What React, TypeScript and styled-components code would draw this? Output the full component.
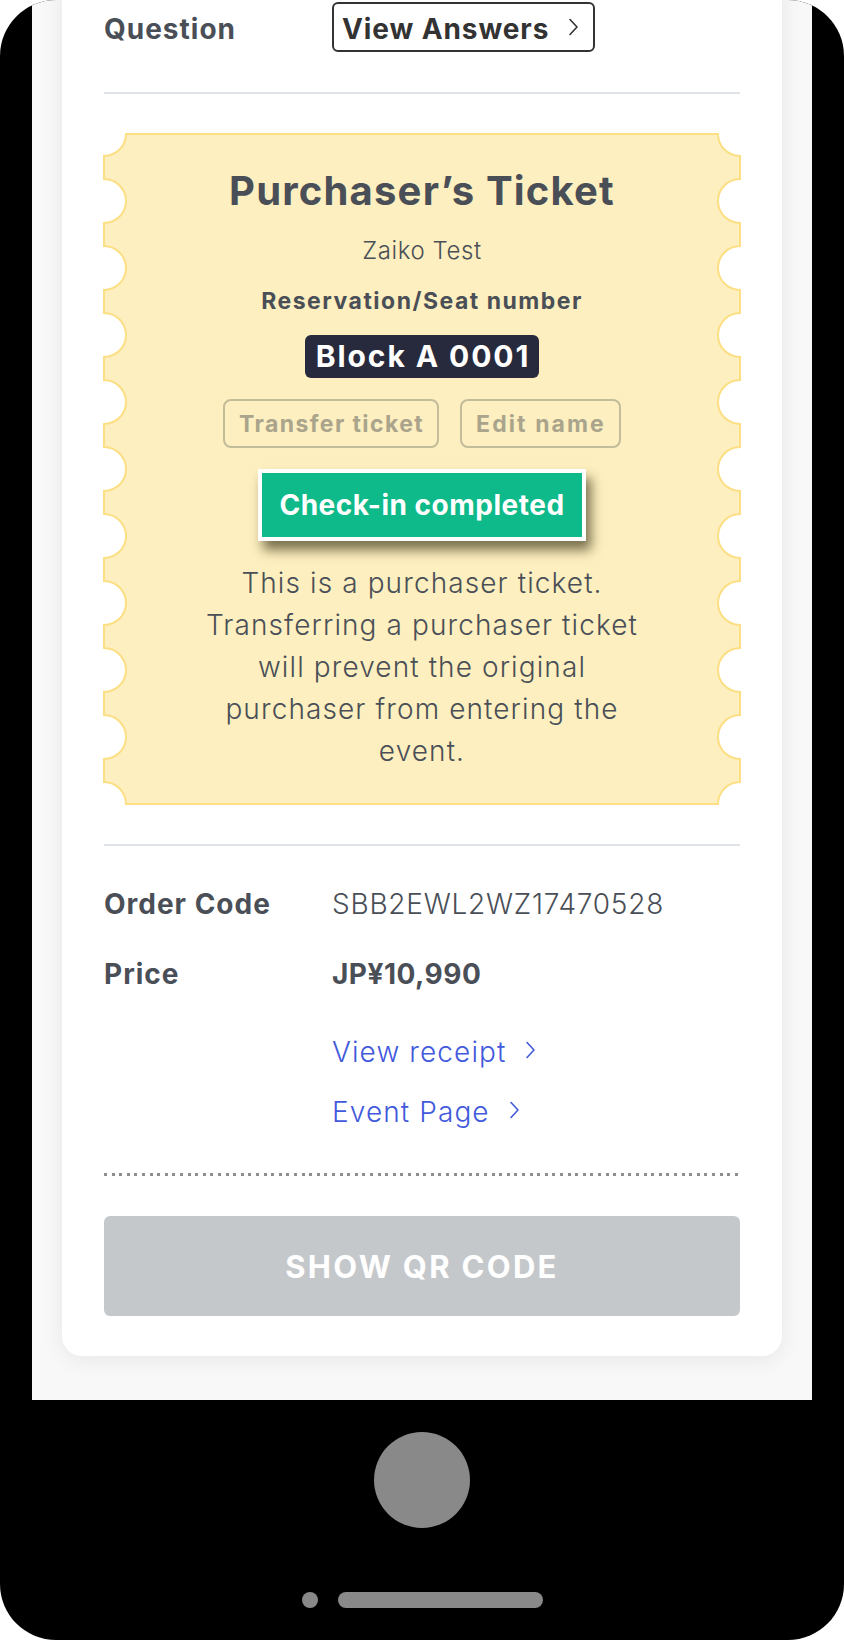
import React from "react";
import styled, { createGlobalStyle } from "styled-components";

const GlobalStyle = createGlobalStyle`
  html, body { margin: 0; padding: 0; background: #ffffff; }
  body {
    width: 844px;
    height: 1640px;
    overflow: hidden;
    font-family: Inter, "Open Sans", sans-serif;
    -webkit-font-smoothing: antialiased;
  }
  * { box-sizing: border-box; }
`;

const TEXT = "#4a4f57";

const Phone = styled.div`
  width: 844px;
  height: 1640px;
  background: #000;
  border-radius: 56px;
  overflow: hidden;
  display: flex;
  flex-direction: column;
  align-items: center;
`;

const Screen = styled.div`
  flex: none;
  width: 780px;
  height: 1400px;
  background: #f8f8f8;
  padding: 0 30px;
  overflow: hidden;
`;

const Card = styled.div`
  margin-top: -30px;
  background: #fff;
  border-radius: 20px;
  box-shadow: 0 4px 22px rgba(0, 0, 0, 0.07);
  padding: 32px 42px 40px;
  display: flex;
  flex-direction: column;
`;

const InfoRow = styled.div<{ $gap?: number }>`
  display: grid;
  grid-template-columns: 228px 1fr;
  align-items: center;
  margin-top: ${(p) => p.$gap ?? 0}px;
`;

const Label = styled.div`
  padding-top: 4px;
  font-size: 28px;
  line-height: 42px;
  font-weight: 700;
  letter-spacing: 1px;
  color: ${TEXT};
`;

const Value = styled.div<{ $bold?: boolean }>`
  padding-top: 4px;
  font-size: 28px;
  line-height: 42px;
  font-weight: ${(p) => (p.$bold ? 700 : 300)};
  letter-spacing: ${(p) => (p.$bold ? 0.5 : 0.75)}px;
  color: ${TEXT};
`;

const OutlineButton = styled.button`
  justify-self: start;
  display: inline-flex;
  align-items: center;
  gap: 18px;
  height: 50px;
  padding: 3px 14px 0 8px;
  border: 2px solid #333;
  border-radius: 6px;
  background: #fff;
  color: #333;
  font-family: inherit;
  font-size: 28px;
  font-weight: 700;
  letter-spacing: 0.9px;
  cursor: pointer;
  svg { margin-top: -3px; }
`;

const Divider = styled.div<{ $gap: number }>`
  height: 2px;
  background: #dfe2e6;
  margin-top: ${(p) => p.$gap}px;
`;

const Ticket = styled.div`
  position: relative;
  margin-top: 40px;
  width: 636px;
  height: 670px;
  padding: 33px 60px 0;
  display: flex;
  flex-direction: column;
  align-items: center;
  text-align: center;
  & > * { position: relative; }
`;

const TicketShape = styled.svg`
  position: absolute !important;
  inset: 0;
  overflow: visible;
`;

const TicketTitle = styled.h2`
  margin: 0;
  font-size: 40px;
  line-height: 48px;
  font-weight: 700;
  letter-spacing: 1.2px;
  color: ${TEXT};
`;

const HolderName = styled.div`
  margin-top: 18px;
  font-size: 24px;
  line-height: 36px;
  font-weight: 300;
  letter-spacing: 0.6px;
  color: ${TEXT};
`;

const SeatLabel = styled.div`
  margin-top: 14px;
  font-size: 23px;
  line-height: 36px;
  font-weight: 700;
  letter-spacing: 1.5px;
  color: ${TEXT};
`;

const SeatBadge = styled.div`
  margin-top: 16px;
  height: 43px;
  padding: 0 9px 0 11px;
  border-radius: 6px;
  background: #272a3c;
  color: #fff;
  font-size: 30px;
  line-height: 43px;
  font-weight: 700;
  letter-spacing: 1.9px;
`;

const ActionRow = styled.div`
  margin-top: 21px;
  display: flex;
  gap: 21px;
`;

const GhostButton = styled.button<{ $tracking: number }>`
  height: 49px;
  padding: 0 13px 0 14px;
  border: 2px solid #c3bc9b;
  border-radius: 8px;
  background: transparent;
  color: #a9a48b;
  font-family: inherit;
  font-size: 23px;
  font-weight: 700;
  letter-spacing: ${(p) => p.$tracking}px;
`;

const CheckInBadge = styled.div`
  margin-top: 21px;
  height: 72px;
  padding: 0 17px;
  border: 4px solid #fff;
  background: #0fba8a;
  color: #fff;
  font-size: 28px;
  line-height: 64px;
  font-weight: 700;
  letter-spacing: 0.5px;
  box-shadow: 5px 9px 11px rgba(40, 35, 10, 0.62);
`;

const Notice = styled.p`
  margin: 21px 0 0;
  max-width: 446px;
  font-size: 28px;
  line-height: 42px;
  font-weight: 300;
  letter-spacing: 1.1px;
  color: ${TEXT};
`;

const Details = styled.div`
  padding-top: 33px;
  display: flex;
  flex-direction: column;
`;

const LinkList = styled.div`
  margin-top: 32px;
  margin-left: 228px;
  display: flex;
  flex-direction: column;
  align-items: flex-start;
  gap: 14px;
`;

const TextLink = styled.a`
  display: inline-flex;
  align-items: center;
  gap: 18px;
  padding-top: 4px;
  font-size: 28px;
  line-height: 42px;
  font-weight: 300;
  letter-spacing: 1.1px;
  color: #4259dc;
  text-decoration: none;
  svg { margin-top: -4px; }
`;

const DottedRule = styled.div`
  margin-top: 40px;
  height: 3px;
  background: repeating-linear-gradient(
    to right,
    #8e8e8e 0 3px,
    transparent 3px 7.6px
  );
`;

const QrButton = styled.button`
  margin-top: 40px;
  height: 100px;
  border: none;
  border-radius: 6px;
  background: #c5c8cb;
  color: #fff;
  font-family: inherit;
  font-size: 31px;
  font-weight: 700;
  letter-spacing: 2.3px;
`;

const Chin = styled.div`
  flex: 1;
  width: 100%;
  display: flex;
  flex-direction: column;
  align-items: center;
  padding-top: 32px;
`;

const HomeButton = styled.div`
  width: 96px;
  height: 96px;
  border-radius: 50%;
  background: #898989;
`;

const Indicators = styled.div`
  margin-top: 64px;
  display: flex;
  align-items: center;
  gap: 20px;
`;

const Pill = styled.div<{ $w: number }>`
  width: ${(p) => p.$w}px;
  height: 16px;
  border-radius: 8px;
  background: #898989;
`;

const Chevron: React.FC = () => (
  <svg width="12" height="18" viewBox="0 0 12 18" fill="none">
    <path d="M3 1.5 L10 9 L3 16.5" stroke="currentColor" strokeWidth="1.6" strokeLinecap="round" strokeLinejoin="round" />
  </svg>
);

function ticketPath(w: number, h: number, r: number, step: number): string {
  const n = Math.round(h / step);
  let d = `M ${r} 0 L ${w - r} 0 A ${r} ${r} 0 0 0 ${w} ${r}`;
  for (let k = 1; k < n; k++) {
    const c = k * step;
    d += ` L ${w} ${c - r} A ${r} ${r} 0 0 0 ${w} ${c + r}`;
  }
  d += ` L ${w} ${h - r} A ${r} ${r} 0 0 0 ${w - r} ${h} L ${r} ${h} A ${r} ${r} 0 0 0 0 ${h - r}`;
  for (let k = n - 1; k >= 1; k--) {
    const c = k * step;
    d += ` L 0 ${c + r} A ${r} ${r} 0 0 0 0 ${c - r}`;
  }
  d += ` L 0 ${r} A ${r} ${r} 0 0 0 ${r} 0 Z`;
  return d;
}

export default function App() {
  return (
    <>
      <GlobalStyle />
      <Phone>
        <Screen>
          <Card>
            <InfoRow>
              <Label>Question</Label>
              <OutlineButton>
                View Answers
                <Chevron />
              </OutlineButton>
            </InfoRow>
            <Divider $gap={40} />
            <Ticket>
              <TicketShape width="636" height="670" viewBox="0 0 636 670">
                <path d={ticketPath(636, 670, 22, 67)} fill="#fdefbf" stroke="#fcdf84" strokeWidth="2" />
              </TicketShape>
              <TicketTitle>Purchaser’s Ticket</TicketTitle>
              <HolderName>Zaiko Test</HolderName>
              <SeatLabel>Reservation/Seat number</SeatLabel>
              <SeatBadge>Block A 0001</SeatBadge>
              <ActionRow>
                <GhostButton $tracking={1.4}>Transfer ticket</GhostButton>
                <GhostButton $tracking={2.1}>Edit name</GhostButton>
              </ActionRow>
              <CheckInBadge>Check-in completed</CheckInBadge>
              <Notice>
                This is a purchaser ticket. Transferring a purchaser ticket will prevent the original purchaser from entering the event.
              </Notice>
            </Ticket>
            <Divider $gap={40} />
            <Details>
              <InfoRow>
                <Label>Order Code</Label>
                <Value>SBB2EWL2WZ17470528</Value>
              </InfoRow>
              <InfoRow $gap={24}>
                <Label>Price</Label>
                <Value $bold>JP¥10,990</Value>
              </InfoRow>
              <LinkList>
                <TextLink href="#">
                  View receipt
                  <Chevron />
                </TextLink>
                <TextLink href="#">
                  Event Page
                  <Chevron />
                </TextLink>
              </LinkList>
            </Details>
            <DottedRule />
            <QrButton>SHOW QR CODE</QrButton>
          </Card>
        </Screen>
        <Chin>
          <HomeButton />
          <Indicators>
            <Pill $w={16} />
            <Pill $w={205} />
          </Indicators>
        </Chin>
      </Phone>
    </>
  );
}
